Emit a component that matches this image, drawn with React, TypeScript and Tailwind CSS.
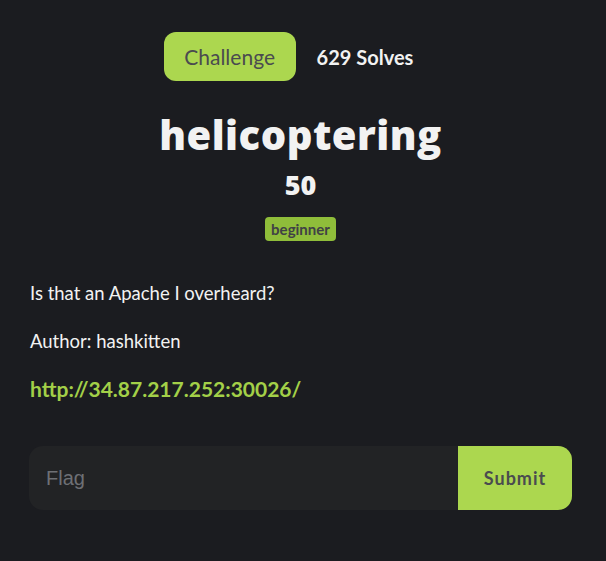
import React from "react";

const App = () => {
  return (
    <div className="min-h-[561px] w-full bg-[#1b1c20] font-['Lato',sans-serif] text-[#f2f2f2]">
      <div className="flex flex-col pr-[34px] pl-[29px] pt-[32px]">
        <div className="flex items-center justify-center gap-[21px] pr-[24px]">
          <button className="h-[49px] w-[132px] rounded-[12px] bg-[#acd74f] font-['Lato',sans-serif] text-[21px] text-[#4a4b4f]">
            Challenge
          </button>
          <span className="text-[20px] font-bold text-[#f2f2f2]">629 Solves</span>
        </div>
        <h1 className="mt-[29px] text-center font-['Open_Sans',sans-serif] text-[40px] leading-[50px] font-extrabold tracking-[0.5px] text-[#f2f2f2]">
          helicoptering
        </h1>
        <div className="mt-[8px] text-center font-['Open_Sans',sans-serif] text-[27px] leading-[34px] font-extrabold text-[#f2f2f2]">
          50
        </div>
        <div className="mt-[15px] flex justify-center">
          <span className="rounded-[4px] bg-[#8fbd3a] px-[6px] py-[1px] font-['Lato',sans-serif] text-[15px] leading-[22px] font-bold text-[#404145]">
            beginner
          </span>
        </div>
        <p className="mt-[40px] pl-[1px] text-[18.5px] leading-[24px]">Is that an Apache I overheard?</p>
        <p className="mt-[24px] pl-[1px] text-[18.5px] leading-[24px]">Author: hashkitten</p>
        <a href="#" className="mt-[24px] pl-[1px] text-[21px] leading-[24px] font-bold text-[#a3d048]">
          http://34.87.217.252:30026/
        </a>
        <div className="mt-[45px] flex h-[64px] w-full overflow-hidden rounded-[14px] bg-[#222325]">
          <input
            placeholder="Flag"
            className="min-w-0 flex-1 bg-transparent px-[17px] font-['Liberation_Sans',sans-serif] text-[20px] text-[#d0d0d0] outline-none placeholder:text-[#6e7075]"
          />
          <button className="w-[114px] bg-[#acd74f] font-['Lato',sans-serif] text-[18px] font-bold tracking-[1px] text-[#4a4b4f]">
            Submit
          </button>
        </div>
      </div>
    </div>
  );
};

export default App;
